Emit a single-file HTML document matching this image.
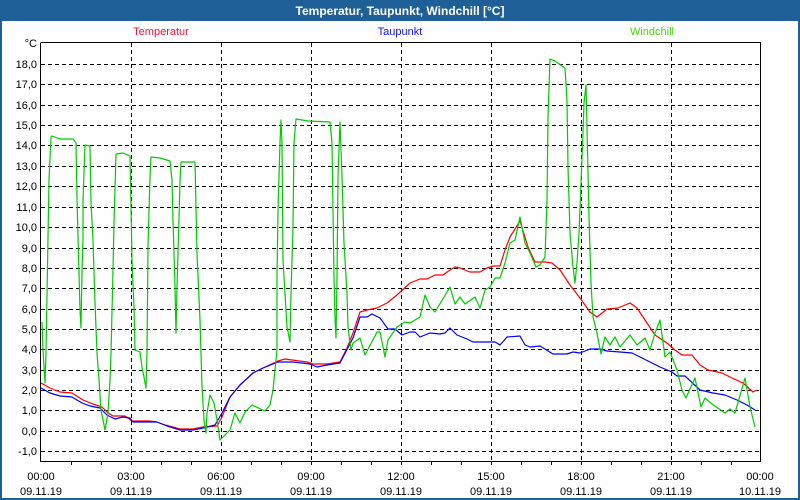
<!DOCTYPE html>
<html><head><meta charset="utf-8"><style>
html,body{margin:0;padding:0;background:#1f5f97;}
svg{display:block;}
text{font-family:"Liberation Sans","DejaVu Sans",sans-serif;font-size:11px;}
</style></head><body>
<svg width="800" height="500" viewBox="0 0 800 500" xmlns="http://www.w3.org/2000/svg">
<rect x="0" y="0" width="800" height="500" fill="#1f5f97"/>
<rect x="2" y="21" width="796" height="477" fill="#fdfefd"/>
<text x="400" y="15" text-anchor="middle" fill="#fff" font-weight="bold" style="font-size:12px">Temperatur, Taupunkt, Windchill [°C]</text>
<text x="161" y="35" text-anchor="middle" fill="#ff1040">Temperatur</text>
<text x="400" y="35" text-anchor="middle" fill="#1010ff">Taupunkt</text>
<text x="652" y="35" text-anchor="middle" fill="#44dd00">Windchill</text>
<g stroke="#000" stroke-width="1" stroke-dasharray="4,3" fill="none">
<path d="M41 64.5H760M41 84.5H760M41 105.5H760M41 125.5H760M41 145.5H760M41 166.5H760M41 186.5H760M41 207.5H760M41 227.5H760M41 248.5H760M41 268.5H760M41 288.5H760M41 309.5H760M41 329.5H760M41 349.5H760M41 370.5H760M41 390.5H760M41 410.5H760M41 431.5H760M41 451.5H760"/>
<path d="M131.5 43V461M221.5 43V461M311.5 43V461M401.5 43V461M491.5 43V461M581.5 43V461M671.5 43V461"/>
</g>
<path d="M40.5 43V461.5H760.5V42.5H40.5" stroke="#000" stroke-width="1" fill="none"/>
<path d="M71.5 461v4M101.5 461v4M131.5 461v4M161.5 461v4M191.5 461v4M221.5 461v4M251.5 461v4M281.5 461v4M311.5 461v4M341.5 461v4M371.5 461v4M401.5 461v4M431.5 461v4M461.5 461v4M491.5 461v4M521.5 461v4M551.5 461v4M581.5 461v4M611.5 461v4M641.5 461v4M671.5 461v4M701.5 461v4M731.5 461v4" stroke="#000"/>
<g text-anchor="end" fill="#000">
<text x="37" y="47">°C</text>
<text x="37" y="68">18,0</text><text x="37" y="88">17,0</text><text x="37" y="109">16,0</text><text x="37" y="129">15,0</text><text x="37" y="149">14,0</text><text x="37" y="170">13,0</text><text x="37" y="190">12,0</text><text x="37" y="211">11,0</text><text x="37" y="231">10,0</text><text x="37" y="252">9,0</text><text x="37" y="272">8,0</text><text x="37" y="292">7,0</text><text x="37" y="313">6,0</text><text x="37" y="333">5,0</text><text x="37" y="353">4,0</text><text x="37" y="374">3,0</text><text x="37" y="394">2,0</text><text x="37" y="414">1,0</text><text x="37" y="435">0,0</text><text x="37" y="455">-1,0</text>
</g>
<g text-anchor="middle" fill="#000">
<text x="41" y="480">00:00</text><text x="41" y="495">09.11.19</text>
<text x="131" y="480">03:00</text><text x="131" y="495">09.11.19</text>
<text x="221" y="480">06:00</text><text x="221" y="495">09.11.19</text>
<text x="311" y="480">09:00</text><text x="311" y="495">09.11.19</text>
<text x="401" y="480">12:00</text><text x="401" y="495">09.11.19</text>
<text x="491" y="480">15:00</text><text x="491" y="495">09.11.19</text>
<text x="581" y="480">18:00</text><text x="581" y="495">09.11.19</text>
<text x="671" y="480">21:00</text><text x="671" y="495">09.11.19</text>
<text x="760" y="480">00:00</text><text x="760" y="495">10.11.19</text>
</g>
<g fill="none" stroke-width="1.2" stroke-linejoin="round">
<polyline stroke="#ff0000" points="41,383 50,388 60,392 72,393 83,400 93,404 102,407 107,412 113,416 125,416 132,421 150,421 157,422 165,425 173,427 180,429 193,429 203,427 217,426 222,417 230,397 240,385 253,373 263,368 278,361 285,359 292,360 307,362 313,364 327,364 340,362 347,348 353,333 360,312 367,310 377,308 387,303 397,295 410,283 420,279 427,279 435,275 443,275 450,270 455,267 460,268 470,272 480,272 487,268 493,266 500,266 505,250 510,237 520,221 528,247 535,262 545,262 552,263 560,270 570,285 580,298 590,312 597,317 607,309 618,308 630,303 637,308 647,323 655,335 667,343 675,350 682,355 692,355 700,365 708,370 722,373 732,378 743,383 753,392 757,390"/>
<polyline stroke="#0000ff" points="41,388 50,393 60,396 72,397 82,403 90,406 100,408 107,415 115,419 123,417 130,418 133,422 157,422 167,426 180,430 193,430 203,428 215,425 222,413 230,397 240,385 253,373 263,368 278,362 293,362 310,364 317,367 327,365 340,363 353,338 360,317 367,317 372,314 380,318 388,329 395,329 402,335 410,332 415,332 420,337 430,333 440,334 445,333 450,328 457,335 467,339 473,342 495,342 500,345 507,337 520,336 525,345 530,347 540,346 553,354 567,354 573,352 580,353 590,349 600,349 607,351 620,352 632,353 640,357 650,362 660,367 672,372 677,376 685,376 700,390 713,393 725,395 737,400 747,405 755,410"/>
<polyline stroke="#00cc00" points="42,322 43,350 45,383 46,353 48,237 49,180 51,137 52,136 60,139 73,139 76,143 77,197 78,237 79,273 80,310 81,328 82,273 83,237 83,200 85,145 90,146 91,203 93,240 95,303 97,353 99,380 101,410 105,430 108,413 110,380 111,353 113,270 114,223 116,154 123,153 130,156 131,207 132,260 134,307 135,350 140,352 142,367 144,377 146,388 147,353 148,247 150,177 151,157 160,158 170,161 172,180 173,220 175,287 176,333 177,287 178,253 180,182 181,162 195,162 197,253 200,320 202,387 204,420 206,433 207,413 210,395 214,403 217,420 220,440 230,430 235,413 240,423 245,412 252,405 265,411 270,405 273,390 275,370 277,350 277,277 278,210 280,143 281,120 282,143 283,260 287,327 290,342 291,293 293,227 294,143 296,119 308,121 330,122 332,143 333,210 334,277 335,317 336,338 337,277 338,177 340,122 342,177 344,243 347,293 348,327 351,350 353,343 360,338 365,355 377,332 380,332 385,357 388,340 397,327 405,322 410,323 420,317 425,295 430,307 435,312 450,287 455,304 460,297 465,304 475,297 480,308 485,290 490,287 495,278 500,278 505,263 510,243 515,240 520,217 525,243 530,253 536,267 540,265 545,257 547,200 548,117 550,59 555,61 565,68 567,100 568,167 570,233 573,267 575,283 577,263 579,233 581,183 583,133 584,103 586,85 587,127 589,217 591,283 593,317 597,333 601,354 605,337 610,345 615,337 620,347 630,335 637,345 645,338 650,350 655,333 660,320 665,357 670,352 677,370 682,390 686,398 695,378 701,407 705,398 712,404 725,413 730,409 735,413 745,378 750,407 755,427"/>
</g>
</svg>
</body></html>
